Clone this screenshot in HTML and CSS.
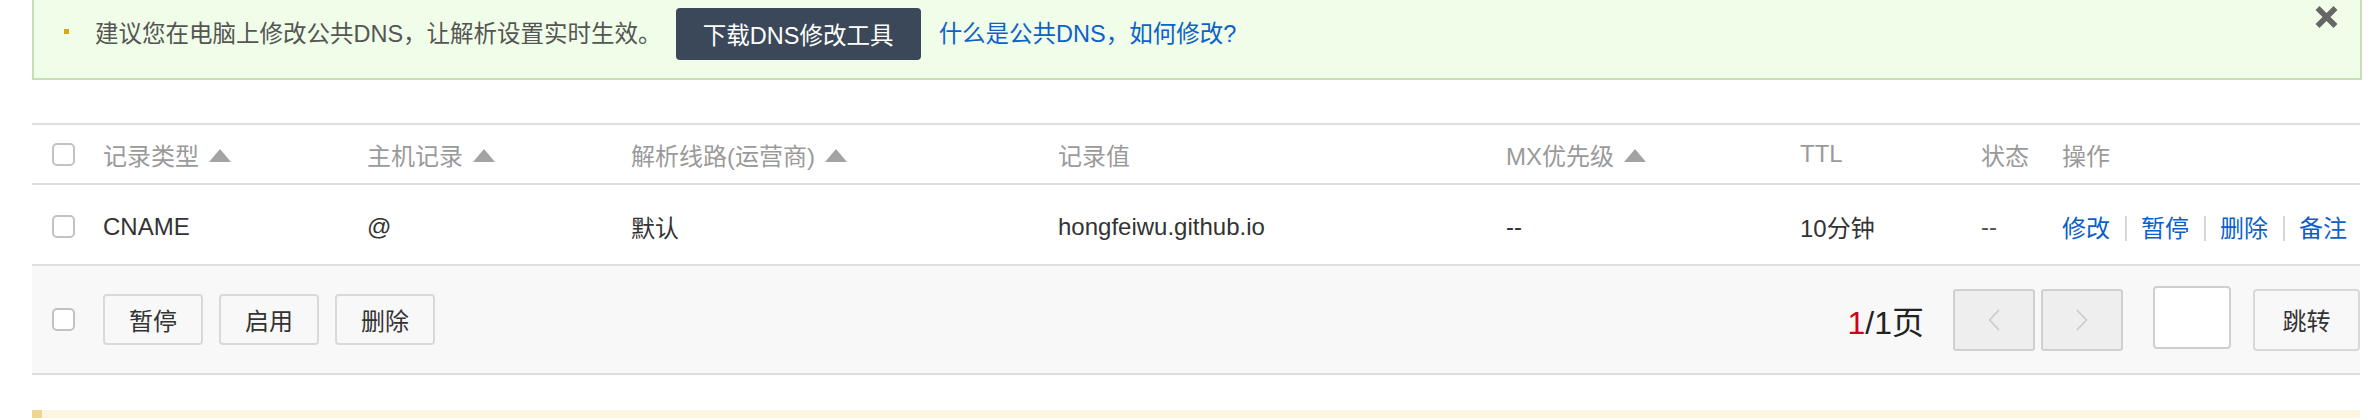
FILE: index.html
```html
<!DOCTYPE html>
<html lang="zh-CN">
<head>
<meta charset="utf-8">
<title>DNS</title>
<link rel="stylesheet" href="styles.css">
</head>
<body>
<div class="alert">
  <span class="bullet"></span>
  <span class="alert-text">建议您在电脑上修改公共DNS，让解析设置实时生效。</span>
  <a class="btn-dark">下载DNS修改工具</a>
  <a class="alert-link">什么是公共DNS，如何修改?</a>
  <span class="close"><svg width="25" height="24" viewBox="0 0 25 24"><path d="M3.5 3 L21.5 21 M21.5 3 L3.5 21" stroke="#666" stroke-width="5.5" fill="none"/></svg></span>
</div>

<div class="table">
  <div class="row head">
    <div class="cell"><span class="cb"></span></div>
    <div class="cell">记录类型<span class="sort"></span></div>
    <div class="cell">主机记录<span class="sort"></span></div>
    <div class="cell">解析线路(运营商)<span class="sort"></span></div>
    <div class="cell">记录值</div>
    <div class="cell">MX优先级<span class="sort"></span></div>
    <div class="cell">TTL</div>
    <div class="cell">状态</div>
    <div class="cell">操作</div>
  </div>
  <div class="row body">
    <div class="cell"><span class="cb"></span></div>
    <div class="cell">CNAME</div>
    <div class="cell">@</div>
    <div class="cell">默认</div>
    <div class="cell">hongfeiwu.github.io</div>
    <div class="cell">--</div>
    <div class="cell">10分钟</div>
    <div class="cell status">--</div>
    <div class="cell ops"><a>修改</a><span class="sep"></span><a>暂停</a><span class="sep"></span><a>删除</a><span class="sep"></span><a>备注</a></div>
  </div>
  <div class="footer">
    <span class="cb"></span>
    <div class="actions">
      <button class="btn">暂停</button>
      <button class="btn">启用</button>
      <button class="btn">删除</button>
    </div>
    <div class="pager">
      <span class="pages"><em>1</em>/1页</span>
      <div class="nav">
        <span class="nav-btn"><svg width="12" height="22" viewBox="0 0 12 22"><polyline points="11,1 1.5,11 11,21" fill="none" stroke="#c8c8c8" stroke-width="1.5"/></svg></span>
        <span class="nav-btn"><svg width="12" height="22" viewBox="0 0 12 22"><polyline points="1,1 10.5,11 1,21" fill="none" stroke="#c8c8c8" stroke-width="1.5"/></svg></span>
      </div>
      <span class="page-input"></span>
      <button class="btn jump">跳转</button>
    </div>
  </div>
</div>

<div class="warn"></div>
</body>
</html>
```

FILE: styles.css
```css
html, body {
  margin: 0;
  padding: 0;
  background: #fff;
}
body {
  font-family: "Liberation Sans", "Noto Sans CJK SC", sans-serif;
  font-size: 24px;
  color: #333;
  width: 2380px;
  height: 420px;
  overflow: hidden;
}

/* alert */
.alert {
  box-sizing: border-box;
  height: 80px;
  margin: 0 18px 0 32px;
  background: #f0fde8;
  border: 2px solid #c6dfb4;
  border-top: none;
  display: flex;
  align-items: center;
  padding-bottom: 10px;
}
.bullet {
  width: 5px;
  height: 5px;
  background: #d8a514;
  margin-left: 30px;
  margin-top: -6px;
  flex: none;
}
.alert-text {
  margin-left: 26px;
  color: #555;
  font-size: 23.5px;
  margin-top: -5px;
}
.btn-dark {
  margin-left: 14px;
  width: 245px;
  height: 52px;
  box-sizing: border-box;
  background: #3b4859;
  color: #fff;
  border-radius: 4px;
  font-size: 23.5px;
  display: flex;
  align-items: center;
  justify-content: center;
  flex: none;
}
.alert-link {
  margin-left: 18px;
  color: #0c61cb;
  font-size: 23.5px;
  margin-top: -5px;
}
.close {
  margin-left: auto;
  margin-right: 21px;
  align-self: flex-start;
  margin-top: 5px;
  display: flex;
}

/* table */
.table {
  margin: 43px 20px 0 32px;
}
.row {
  display: grid;
  grid-template-columns: 51px 264px 264px 427px 448px 294px 181px 81px 1fr;
  padding-left: 20px;
  align-items: center;
}
.head {
  height: 62px;
  box-sizing: border-box;
  border-top: 2px solid #dedede;
  border-bottom: 2px solid #dedede;
  color: #9a9a9a;
}
.body {
  height: 81px;
  box-sizing: border-box;
  border-bottom: 2px solid #dedede;
  color: #333;
  padding-top: 4px;
}
.cell {
  display: flex;
  align-items: center;
  white-space: nowrap;
}
.status {
  color: #555;
}
.cb {
  width: 23px;
  height: 23px;
  box-sizing: border-box;
  border: 2px solid #c2c2c2;
  border-radius: 5px;
  background: #fff;
  display: inline-block;
  flex: none;
}
.sort {
  width: 0;
  height: 0;
  border-left: 11.5px solid transparent;
  border-right: 11.5px solid transparent;
  border-bottom: 13px solid #a3a3a3;
  margin-left: 10px;
  margin-top: 2px;
}
.ops a {
  color: #0b5fcc;
}
.sep {
  width: 2px;
  height: 25px;
  background: #d6d6d6;
  margin: 4px 14px 0 15px;
}

/* footer */
.footer {
  height: 109px;
  box-sizing: border-box;
  background: #f8f8f8;
  border-bottom: 2px solid #dedede;
  display: flex;
  align-items: center;
  padding-left: 20px;
}
.actions {
  display: flex;
  gap: 16px;
  margin-left: 28px;
}
.btn {
  font: inherit;
  color: #333;
  width: 100px;
  height: 51px;
  box-sizing: border-box;
  background: #f8f8f8;
  border: 2px solid #d9d9d9;
  border-radius: 4px;
  padding: 0;
  display: flex;
  align-items: center;
  justify-content: center;
}
.pager {
  margin-left: auto;
  display: flex;
  align-items: center;
}
.pages {
  font-size: 32px;
  color: #222;
  margin-right: 29px;
}
.pages em {
  font-style: normal;
  color: #d0021b;
}
.nav {
  display: flex;
  gap: 6px;
}
.nav-btn {
  width: 82px;
  height: 62px;
  box-sizing: border-box;
  background: #eee;
  border: 2px solid #d0d0d0;
  border-radius: 3px;
  display: flex;
  align-items: center;
  justify-content: center;
}
.page-input {
  margin-left: 30px;
  width: 78px;
  height: 63px;
  box-sizing: border-box;
  background: #fff;
  border: 2px solid #cfcfcf;
  border-radius: 4px;
  margin-top: -5px;
}
.jump {
  margin-left: 22px;
  width: 107px;
  height: 62px;
}

/* warning strip */
.warn {
  margin: 35px 20px 0 32px;
  height: 8px;
  background: #fcf6e1;
  border-left: 10px solid #f0d590;
}
```
